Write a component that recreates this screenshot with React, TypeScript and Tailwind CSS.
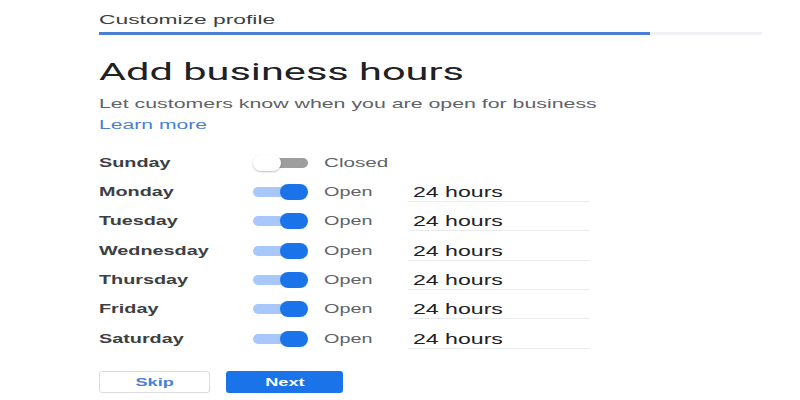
import React from "react";

const days = [
  { name: "Sunday", open: false },
  { name: "Monday", open: true },
  { name: "Tuesday", open: true },
  { name: "Wednesday", open: true },
  { name: "Thursday", open: true },
  { name: "Friday", open: true },
  { name: "Saturday", open: true },
];

// the reference is stretched sideways, so text is widened to match
const Wide = ({ children, s = "scale-x-[1.65]" }: { children: React.ReactNode; s?: string }) => (
  <span className={`inline-block origin-left whitespace-nowrap ${s}`}>{children}</span>
);

const Toggle = ({ on }: { on: boolean }) => (
  <div className="relative h-[16px] w-[55px]">
    <div
      className={`absolute top-[3px] h-[10px] rounded-full ${
        on ? "left-0 w-[50px] bg-[#a8c7fa]" : "left-[8px] w-[47px] bg-[#9e9e9e]"
      }`}
    />
    <div
      className={`absolute top-0 h-[16px] w-[28px] rounded-full ${
        on ? "left-[27px] bg-[#1a73e8]" : "left-0 bg-white shadow-[0_1px_2px_rgba(0,0,0,0.25)]"
      }`}
    />
  </div>
);

export default function App() {
  return (
    <div className="h-[400px] w-[800px] overflow-hidden bg-white pl-[99px] font-['Liberation_Sans',Arial,sans-serif]">
      <div className="pt-[13px] text-[12px] leading-[14px] text-[#3c4043]">
        <Wide s="scale-x-[1.9]">Customize profile</Wide>
      </div>
      <div className="mt-[5px] flex h-[3px] w-[663px]">
        <div className="w-[551px] bg-[#4a7fd6]" />
        <div className="flex-1 bg-[#f1f2f8]" />
      </div>

      <h1 className="mt-[21px] font-['Roboto',sans-serif] text-[24px] leading-[32px] text-[#202124]">
        <Wide s="scale-x-[1.73]">Add business hours</Wide>
      </h1>
      <p className="mt-[7px] text-[13px] leading-[18px] text-[#5f6368]">
        <Wide s="scale-x-[1.64]">Let customers know when you are open for business</Wide>
      </p>
      <div className="mt-[3px] text-[12px] leading-[18px] text-[#4a7fd4]">
        <Wide s="scale-x-[1.76]">Learn more</Wide>
      </div>

      <div className="mt-[14px] flex flex-col">
        {days.map((d) => (
          <div key={d.name} className="flex h-[29.33px] items-center">
            <div className="w-[154px] text-[12px] font-bold text-[#3c4043]">
              <Wide>{d.name}</Wide>
            </div>
            <Toggle on={d.open} />
            <div className="ml-[16px] w-[84px] text-[12px] text-[#5f6368]">
              {d.open ? <Wide>Open</Wide> : <Wide s="scale-x-[1.72]">Closed</Wide>}
            </div>
            {d.open && (
              <div className="h-[20px] w-[182px] border-b border-[#e8eaed] pl-[5px] text-[14px] leading-[20px] text-[#202124]">
                <Wide>24 hours</Wide>
              </div>
            )}
          </div>
        ))}
      </div>

      <div className="mt-[18px] flex gap-[16px]">
        <button className="flex h-[22px] w-[111px] items-center justify-center rounded-[3px] border border-[#dadce0] bg-white text-[11px] font-bold text-[#4a7fd4]">
          <span className="inline-block scale-x-[1.65]">Skip</span>
        </button>
        <button className="flex h-[22px] w-[117px] items-center justify-center rounded-[3px] bg-[#1a73e8] text-[11px] font-bold text-white">
          <span className="inline-block scale-x-[1.65]">Next</span>
        </button>
      </div>
    </div>
  );
}
